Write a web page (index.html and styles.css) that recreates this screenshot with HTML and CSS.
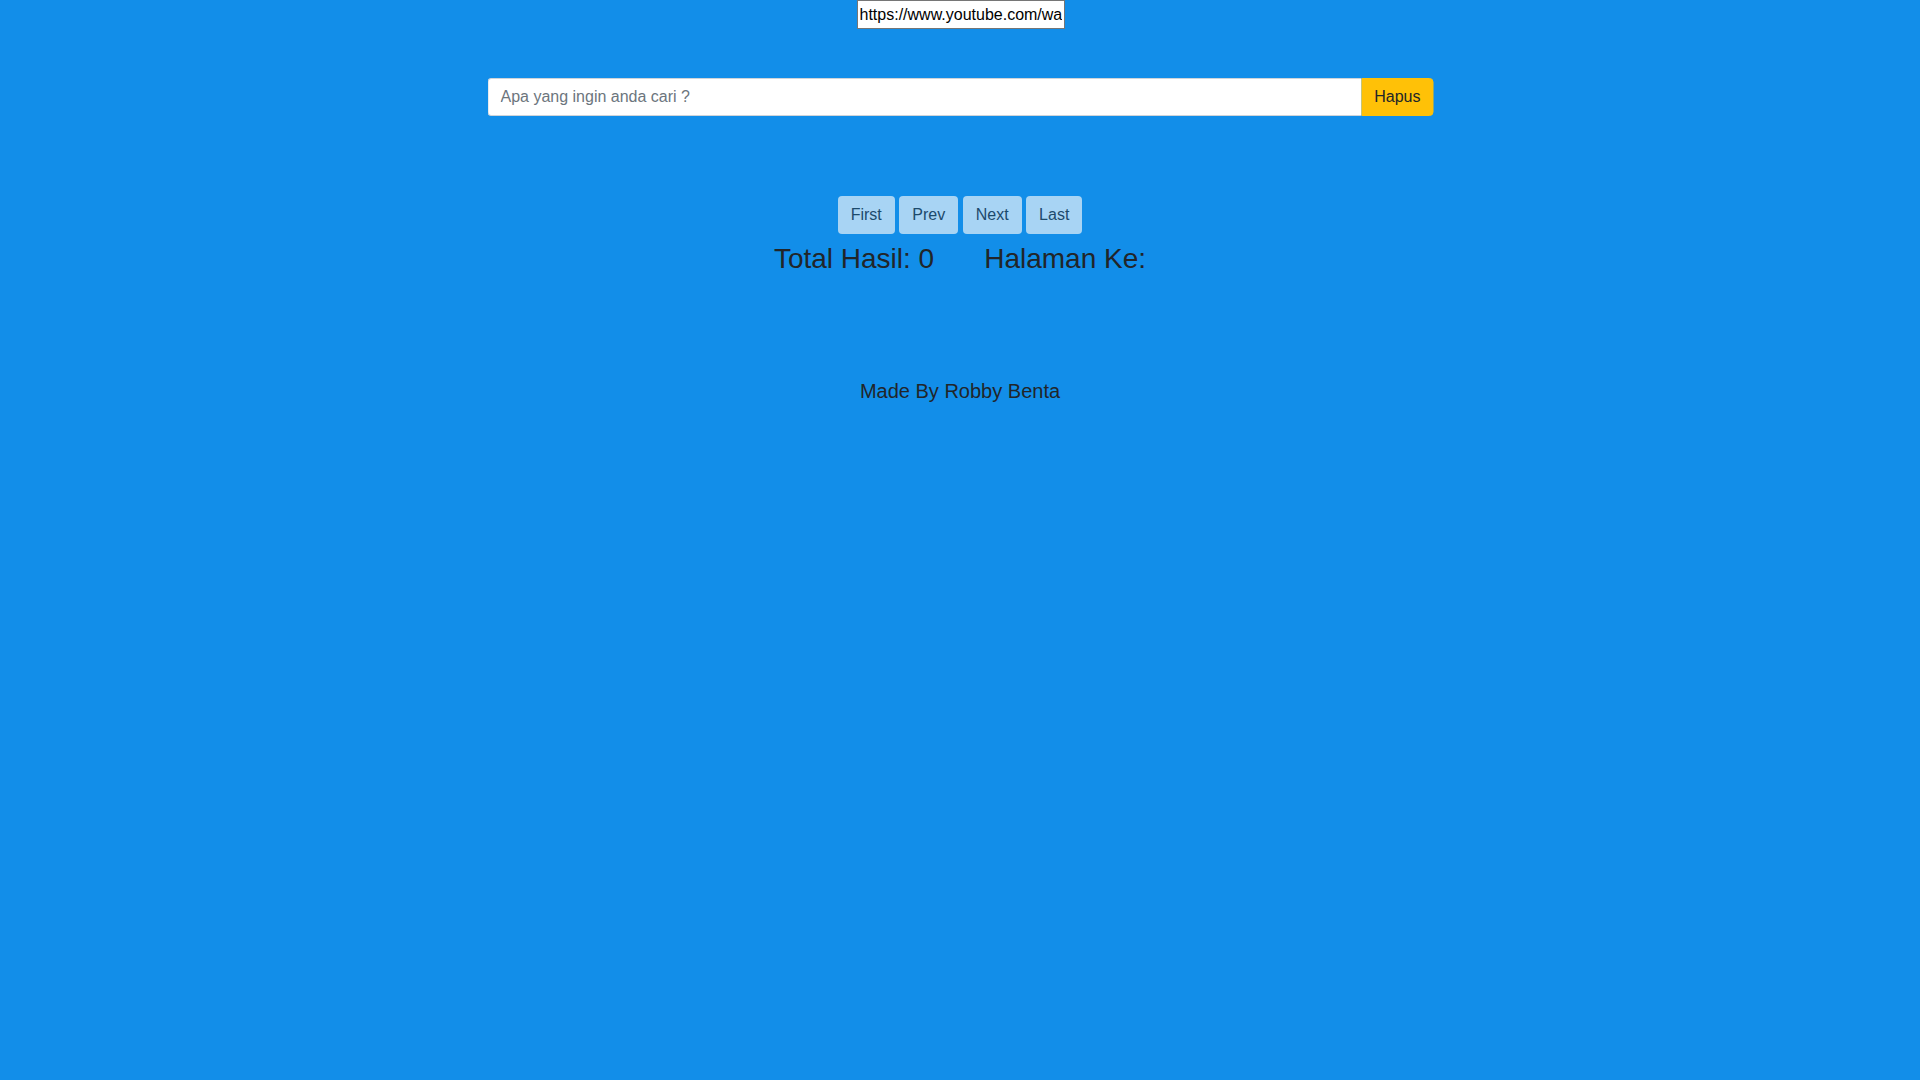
FILE: index.html
```html
<!DOCTYPE html>
<html lang="id">
<head>
<meta charset="utf-8">
<title>Pencarian</title>
<link rel="stylesheet" href="styles.css">
</head>
<body>
<div class="url-row">
  <input class="url-input" type="text" value="https://www.youtube.com/watch">
</div>
<div class="search">
  <input class="search-input" type="text" placeholder="Apa yang ingin anda cari ?">
  <button class="btn-hapus" type="button">Hapus</button>
</div>
<div class="pager">
  <button class="btn-page" type="button">First</button>
  <button class="btn-page" type="button">Prev</button>
  <button class="btn-page" type="button">Next</button>
  <button class="btn-page" type="button">Last</button>
</div>
<div class="stats">
  <h3 class="stat">Total Hasil: 0</h3>
  <h3 class="stat">Halaman Ke:</h3>
</div>
<h5 class="footer">Made By Robby Benta</h5>
</body>
</html>
```
FILE: styles.css
```css
html, body {
  margin: 0;
  padding: 0;
}
body {
  background: #128ee9;
  font-family: "Liberation Sans", Arial, sans-serif;
  color: #212529;
  height: 1080px;
}
.url-row {
  text-align: center;
  height: 29px;
}
.url-input {
  box-sizing: border-box;
  width: 208px;
  height: 29px;
  margin: 0 0 0 1px;
  border: 1px solid #767676;
  padding: 1px 2px;
  font-family: "Liberation Sans", Arial, sans-serif;
  font-size: 16px;
  color: #000;
  background: #fff;
  vertical-align: top;
  outline: none;
}
.search {
  display: flex;
  width: 946px;
  margin: 49px auto 0;
  height: 38px;
  transform: translateX(0.5px);
}
.search-input {
  flex: 1;
  box-sizing: border-box;
  height: 38px;
  margin: 0;
  border: 1px solid #ced4da;
  border-right: none;
  border-radius: 4px 0 0 4px;
  padding: 6px 12px;
  font-family: "Liberation Sans", Arial, sans-serif;
  font-size: 16px;
  color: #495057;
  background: #fff;
  outline: none;
}
.search-input::placeholder {
  color: #6c757d;
  opacity: 1;
}
.btn-hapus {
  box-sizing: border-box;
  height: 38px;
  margin: 0;
  border: 1px solid #ffc107;
  border-radius: 0 4px 4px 0;
  padding: 6px 12px;
  background: #ffc107;
  color: #212529;
  font-family: "Liberation Sans", Arial, sans-serif;
  font-size: 16px;
  line-height: 24px;
}
.pager {
  margin-top: 80px;
  display: flex;
  justify-content: center;
  gap: 4.5px;
  height: 38px;
}
.btn-page {
  box-sizing: border-box;
  height: 38px;
  margin: 0;
  border: 1px solid transparent;
  border-radius: 4px;
  padding: 6px 12px;
  background: rgb(168, 212, 244);
  color: rgb(28, 74, 108);
  font-family: "Liberation Sans", Arial, sans-serif;
  font-size: 16px;
  line-height: 24px;
}
.stats {
  display: flex;
  justify-content: center;
  gap: 50px;
  margin-top: 8px;
}
.stat {
  margin: 0;
  font-size: 28px;
  font-weight: 500;
  line-height: 1.2;
}
.footer {
  margin: 103px 0 0;
  text-align: center;
  font-size: 20px;
  font-weight: 500;
  line-height: 1.2;
}
```
